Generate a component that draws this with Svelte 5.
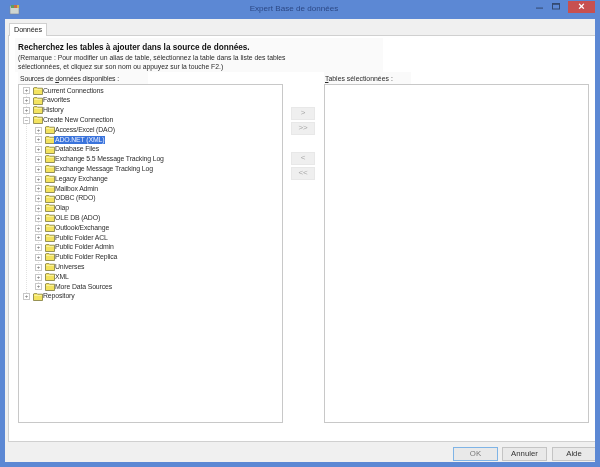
<script lang="ts">
	const groups = ["Current Connections", "Favorites", "History"];
	const children = [
		"Access/Excel (DAO)", "ADO.NET (XML)", "Database Files", "Exchange 5.5 Message Tracking Log",
		"Exchange Message Tracking Log", "Legacy Exchange", "Mailbox Admin", "ODBC (RDO)", "Olap",
		"OLE DB (ADO)", "Outlook/Exchange", "Public Folder ACL", "Public Folder Admin",
		"Public Folder Replica", "Universes", "XML", "More Data Sources",
	];
	const rows = [
		...groups.map((label) => ({ label, depth: 0, open: false })),
		{ label: "Create New Connection", depth: 0, open: true },
		...children.map((label) => ({ label, depth: 1, open: false })),
		{ label: "Repository", depth: 0, open: false },
	];
</script>

{#snippet folder()}
	<svg class="folder" width="10" height="8" viewBox="0 0 10 8">
		<path d="M0.5 7.5V1L1.2 0.4H3.8L4.6 1.2H9.5V7.5Z" fill="#f3e35f" stroke="#7d7a3e" stroke-width="0.8" />
		<path d="M1.2 2.4H8.8" stroke="#faf4a8" stroke-width="0.9" />
	</svg>
{/snippet}

<div class="window">
	<header class="titlebar">
		<svg class="app-icon" width="11" height="11" viewBox="0 0 11 11">
			<rect x="1" y="2" width="9" height="8" fill="#cfd6d0" stroke="#78849a" stroke-width="0.6" />
			<rect x="2" y="1" width="3" height="3" fill="#5f9e62" />
			<rect x="5" y="1" width="3" height="3" fill="#c96a4a" />
			<rect x="8" y="1" width="2" height="3" fill="#d4b648" />
		</svg>
		<span class="title">Expert Base de données</span>
		<div class="controls">
			<svg width="14" height="12" viewBox="0 0 14 12"><rect x="2" y="7.5" width="7" height="1.2" fill="#39527f" /></svg>
			<svg width="14" height="12" viewBox="0 0 14 12"><rect x="1.5" y="3.5" width="7" height="5.5" fill="none" stroke="#33496f" stroke-width="1" /><rect x="1" y="3" width="8" height="1.8" fill="#33496f" /></svg>
			<div class="close">×</div>
		</div>
	</header>

	<div class="client">
		<div class="tabstrip">
			<div class="tab">Données</div>
		</div>

		<section class="page">
			<div class="intro">
				<h1>Recherchez les tables à ajouter dans la source de données.</h1>
				<p>(Remarque : Pour modifier un alias de table, sélectionnez la table dans la liste des tables sélectionnées, et cliquez sur son nom ou appuyez sur la touche F2.)</p>
			</div>

			<div class="columns">
				<div class="col">
					<div class="cap left-cap">Sources de <u>d</u>onnées disponibles :</div>
					<div class="listbox tree">
						<span class="guide guide-root"></span>
						<span class="guide guide-child"></span>
						{#each rows as row}
							<div class="row" class:child={row.depth === 1}>
								<span class="expander">{row.open ? "−" : "+"}</span>
								{@render folder()}
								<span class="label" class:selected={row.label === "ADO.NET (XML)"}>{row.label}</span>
							</div>
						{/each}
					</div>
				</div>

				<div class="movers">
					<div class="mover">&gt;</div>
					<div class="mover">&gt;&gt;</div>
					<div class="mover gap">&lt;</div>
					<div class="mover">&lt;&lt;</div>
				</div>

				<div class="col">
					<div class="cap right-cap"><u>T</u>ables sélectionnées :</div>
					<div class="listbox"></div>
				</div>
			</div>
		</section>

		<footer class="buttons">
			<div class="btn focus">OK</div>
			<div class="btn">Annuler</div>
			<div class="btn last">Aide</div>
		</footer>
	</div>
</div>

<style>
	:global(body) {
		margin: 0;
		background: #5c88d4;
	}

	.window {
		width: 600px;
		height: 467px;
		box-sizing: border-box;
		padding: 0 5px 5px;
		background: #5c88d4;
		display: flex;
		flex-direction: column;
		overflow: hidden;
		font-family: "Liberation Sans", Arial, sans-serif;
		font-size: 6.9px;
		letter-spacing: -0.14px;
		color: #222;
		filter: blur(0.3px);
	}

	.titlebar {
		height: 19px;
		flex-shrink: 0;
		display: flex;
		align-items: flex-start;
		position: relative;
	}

	.app-icon {
		margin: 4px 0 0 4px;
	}

	.title {
		position: absolute;
		left: 0;
		right: 12px;
		top: 4px;
		text-align: center;
		font-size: 8.1px;
		letter-spacing: 0;
		color: #2c4885;
	}

	.controls {
		margin-left: auto;
		display: flex;
		align-items: flex-start;
		gap: 3px;
	}

	.close {
		width: 27px;
		height: 12px;
		margin-top: 1px;
		background: #c75050;
		color: #fff;
		text-align: center;
		font-size: 11px;
		font-weight: bold;
		line-height: 11px;
	}

	.client {
		flex: 1;
		min-height: 0;
		display: flex;
		flex-direction: column;
		background: #f0f0f0;
	}

	.tabstrip {
		height: 16px;
		flex-shrink: 0;
		padding-left: 4px;
		display: flex;
		align-items: flex-end;
	}

	.tab {
		width: 38px;
		height: 13px;
		box-sizing: border-box;
		border: 1px solid #d0d0d0;
		border-bottom: none;
		background: #fff;
		text-align: center;
		font-size: 7.2px;
		line-height: 12px;
		margin-bottom: -1px;
		position: relative;
	}

	.page {
		height: 407px;
		flex-shrink: 0;
		box-sizing: border-box;
		margin-left: 3px;
		border: 1px solid #d0d0d0;
		border-width: 1px 0 1px 1px;
		background: #fff;
		padding: 2px 6px 0 9px;
		display: flex;
		flex-direction: column;
	}

	.intro {
		width: 368px;
		height: 34px;
		margin-left: -3px;
		padding-left: 3px;
		background: #fafafa;
		box-sizing: border-box;
	}

	h1 {
		margin: 0;
		padding-top: 4px;
		font-size: 8.2px;
		line-height: 11px;
		font-weight: bold;
		letter-spacing: 0;
		color: #111;
	}

	p {
		margin: 1px 0 0;
		width: 290px;
		line-height: 8.6px;
		font-size: 6.8px;
		letter-spacing: 0;
		color: #2a2a2a;
	}

	.columns {
		flex: 1;
		display: grid;
		grid-template-columns: 265px 41px 265px;
	}

	.col {
		display: flex;
		flex-direction: column;
	}

	.cap {
		height: 12px;
		box-sizing: border-box;
		padding-top: 2px;
		line-height: 9px;
		color: #2a2a2a;
		background: #fafafa;
		align-self: flex-start;
	}

	.left-cap {
		padding: 2px 3px 0 2px;
		width: 130px;
	}

	.right-cap {
		padding: 2px 18px 0 1px;
		letter-spacing: 0;
	}

	.listbox {
		height: 339px;
		box-sizing: border-box;
		border: 1px solid #c8c8c8;
		background: #fff;
	}

	.tree {
		padding: 1px 0 0 4px;
		position: relative;
	}

	.guide {
		position: absolute;
		width: 0;
		border-left: 1px dotted #e2e2e2;
	}

	.guide-root {
		left: 7px;
		top: 6px;
		height: 206px;
	}

	.guide-child {
		left: 19px;
		top: 44px;
		height: 160px;
	}

	.row {
		height: 9.8px;
		display: flex;
		align-items: center;
		white-space: nowrap;
		position: relative;
	}

	.row.child {
		padding-left: 12px;
	}

	.expander {
		width: 7px;
		height: 7px;
		box-sizing: border-box;
		border: 1px solid #c8c8c8;
		background: #fff;
		margin-right: 3px;
		font-size: 6px;
		letter-spacing: 0;
		line-height: 5px;
		text-align: center;
		color: #666;
		flex-shrink: 0;
	}

	.folder {
		flex-shrink: 0;
	}

	.label {
		padding: 0 1px 0 0;
		line-height: 8.5px;
		color: #2e2e2e;
	}

	.label.selected {
		background: #3a74dc;
		color: #e8eeff;
		padding: 0 1px;
		margin-left: -1px;
	}

	.movers {
		display: flex;
		flex-direction: column;
		align-items: center;
		padding-top: 35px;
		gap: 2px;
		margin-left: -1px;
	}

	.mover {
		width: 24px;
		height: 13px;
		background: #efefef;
		border: 1px solid #e8e8e8;
		box-sizing: border-box;
		text-align: center;
		line-height: 10px;
		font-size: 8px;
		color: #a8a8a8;
	}

	.mover.gap {
		margin-top: 15px;
	}

	.buttons {
		flex: 1;
		display: flex;
		justify-content: flex-end;
		align-items: flex-start;
		gap: 4px;
		padding-top: 5px;
		overflow: hidden;
	}

	.btn {
		width: 45px;
		height: 14px;
		box-sizing: border-box;
		border: 1px solid #c4c4c4;
		background: #e9e9e9;
		text-align: center;
		font-size: 7.8px;
		letter-spacing: 0;
		line-height: 12px;
		color: #333;
	}

	.btn.focus {
		border-color: #7fb4e6;
		color: #777;
	}

	.btn.last {
		width: 43px;
		margin-left: 1px;
		border-right: none;
	}
</style>
